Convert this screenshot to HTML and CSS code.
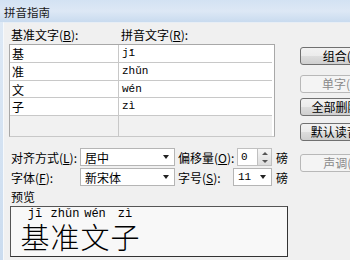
FILE: index.html
```html
<!DOCTYPE html>
<html>
<head>
<meta charset="utf-8">
<link rel="stylesheet" href="styles.css">
</head>
<body>
<div class="frame">
  <div class="title">拼音指南</div>
  <div class="body">
    <div class="left">
      <div class="heads">
        <span class="h1">基准文字(<u>B</u>):</span>
        <span class="h2">拼音文字(<u>R</u>):</span>
      </div>
      <div class="table">
        <div class="cell c1">基</div><div class="cell c2 py">jī</div>
        <div class="cell c1">准</div><div class="cell c2 py">zhǔn</div>
        <div class="cell c1">文</div><div class="cell c2 py">wén</div>
        <div class="cell c1">子</div><div class="cell c2 py">zì</div>
        <div class="cell c1 empty"></div><div class="cell c2 empty"></div>
      </div>
      <div class="opts">
        <span class="lbl">对齐方式(<u>L</u>):</span>
        <div class="select wide"><span>居中</span><i class="arrow"></i></div>
        <span class="lbl2">偏移量(<u>O</u>):</span>
        <div class="spin"><span class="val">0</span><span class="spinbtn"><i class="up"></i><i class="down"></i></span></div>
        <span class="unit">磅</span>

        <span class="lbl">字体(<u>F</u>):</span>
        <div class="select wide"><span>新宋体</span><i class="arrow"></i></div>
        <span class="lbl2">字号(<u>S</u>):</span>
        <div class="select small"><span>11</span><i class="arrow"></i></div>
        <span class="unit">磅</span>
      </div>
      <div class="plabel">预览</div>
      <div class="preview">
        <span class="rb"><span class="rt">jī</span><span class="rc">基</span></span>
        <span class="rb"><span class="rt">zhǔn</span><span class="rc">准</span></span>
        <span class="rb"><span class="rt">wén</span><span class="rc">文</span></span>
        <span class="rb"><span class="rt">zì</span><span class="rc">子</span></span>
      </div>
    </div>
    <div class="right">
      <div class="btn b1">组合(<u>G</u>)</div>
      <div class="btn dis b2">单字(<u>M</u>)</div>
      <div class="btn b3">全部删除(<u>V</u>)</div>
      <div class="btn b4">默认读音(<u>D</u>)</div>
      <div class="btn dis b5">声调(<u>T</u>)</div>
    </div>
  </div>
</div>
</body>
</html>
```
FILE: styles.css
```css
html, body { margin: 0; padding: 0; }
body {
  width: 350px; height: 260px; overflow: hidden;
  font-family: "Noto Sans CJK SC", "Liberation Sans", sans-serif;
  font-size: 12px; color: #000;
}
u { text-decoration: underline; }
.frame {
  width: 350px; height: 260px; overflow: hidden;
  display: flex; flex-direction: column;
  background: linear-gradient(180deg, #dfeaf6 0%, #cbdcef 100%);
}
.title {
  height: 22px; line-height: 24px; padding-left: 4px; flex: none;
  font-size: 11.5px; color: #1a1a1a;
  background: linear-gradient(180deg, #d3e2f3 0%, #dde8f5 50%, #c9dbef 100%);
}
.body {
  flex: 1; margin-left: 3px; min-width: 0;
  background: #f0f0f0;
  border-top: 1px solid #e8eef5;
  border-left: 1px solid #f6f9fc;
  display: flex;
}
.left { width: 285px; flex: none; padding-left: 5px; display: flex; flex-direction: column; }
.heads { height: 19px; margin-top: 2px; display: flex; align-items: center; white-space: nowrap; }
.h1 { width: 109px; padding-left: 2px; box-sizing: border-box; }
.h2 { padding-left: 3px; }
.table {
  width: 264px; display: grid; grid-template-columns: 109px 153px;
  grid-template-rows: 18px 18px 17px 18px 20px;
  border: 1px solid #a8a8a8; border-bottom-color: #c8c8c8;
  background: #fff;
}
.cell {
  border-right: 1px solid #c8c8c8; border-bottom: 1px solid #c8c8c8;
  padding-left: 2px; font-size: 12px; line-height: 17px; overflow: hidden;
}
.cell.c2 { border-right: none; padding-left: 3px; }
.cell.py { font-family: "Liberation Mono", monospace; font-size: 11px; }
.cell.empty { background: #f1f1f1; border-bottom: none; }
.opts {
  margin-top: 11px;
  display: grid;
  grid-template-columns: 71px 95px 58px 39px 16px;
  grid-template-rows: 18px 18px;
  row-gap: 2px;
  align-items: center;
  white-space: nowrap;
}
.lbl { padding-left: 2px; }
.lbl2 { padding-left: 3px; }
.select {
  height: 18px; background: #fff; border: 1px solid #b5b5b5; box-sizing: border-box;
  display: flex; align-items: center; justify-content: space-between; padding: 0 5px 0 4px;
}
.select span { line-height: 15px; }
.arrow {
  width: 0; height: 0; border-left: 3.5px solid transparent; border-right: 3.5px solid transparent;
  border-top: 4px solid #222;
}
.select.small { width: 39px; }
.select.small span { font-family: "Liberation Mono", monospace; font-size: 11px; }
.spin { display: flex; height: 18px; width: 35px; margin-left: 4px; box-sizing: border-box; }
.spin .val { flex: 1; background: #fff; border: 1px solid #c0c0c0; border-right: none; padding-left: 3px; font-size: 11px; font-family: "Liberation Mono", monospace; line-height: 16px; }
.spinbtn { width: 13px; display: flex; flex-direction: column; border: 1px solid #c0c0c0; background: linear-gradient(#f6f6f6, #dcdcdc); align-items: center; justify-content: space-around; }
.spinbtn .up { width: 0; height: 0; border-left: 3px solid transparent; border-right: 3px solid transparent; border-bottom: 3px solid #555; }
.spinbtn .down { width: 0; height: 0; border-left: 3px solid transparent; border-right: 3px solid transparent; border-top: 3px solid #555; }
.unit { padding-left: 4px; }
.plabel { margin-top: 3px; padding-left: 2px; height: 15px; line-height: 15px; }
.preview {
  margin-top: 2px; margin-left: 1px; width: 278px; height: 51px; flex: none;
  border: 1px solid #555; border-right-color: #333; border-bottom-color: #333;
  background: #f8f8f8;
  display: flex; padding-left: 9px; box-sizing: border-box;
}
.rb { display: flex; flex-direction: column; align-items: center; width: 30px; }
.rt { font-family: "Liberation Mono", monospace; font-size: 12px; line-height: 12px; margin-top: 1px; }
.rc { font-size: 29px; line-height: 31px; margin-top: 1px; font-weight: 300; }
.right { padding-left: 6px; flex: none; }
.btn {
  width: 86px; height: 18px; box-sizing: border-box; text-align: center; line-height: 16px;
  border: 1px solid #707070; border-radius: 3px; white-space: nowrap;
  background: linear-gradient(180deg, #f2f2f2 0%, #ebebeb 50%, #dddddd 51%, #cfcfcf 100%);
}
.btn.dis { border-color: #b8b8b8; background: #f4f4f4; color: #8a8a8a; }
.b1 { margin-top: 24px; }
.b2 { margin-top: 10px; }
.b3 { margin-top: 5px; }
.b4 { margin-top: 7px; }
.b5 { margin-top: 13px; }
```
